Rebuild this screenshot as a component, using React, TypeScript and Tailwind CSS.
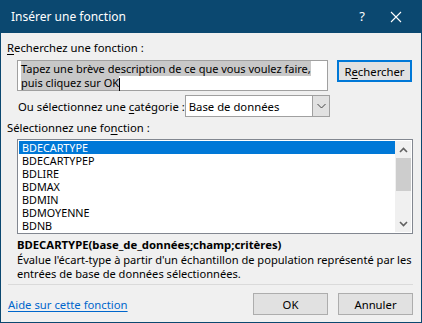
import React from "react";

const font = { fontFamily: '"Noto Sans", "Segoe UI", sans-serif' };

function U({ children }: { children: React.ReactNode }) {
  return <span className="underline underline-offset-2">{children}</span>;
}

export default function App() {
  const items = ["BDECARTYPE", "BDECARTYPEP", "BDLIRE", "BDMAX", "BDMIN", "BDMOYENNE", "BDNB"];
  return (
    <div
      className="w-[422px] h-[323px] bg-[#0b4870] flex flex-col px-px pb-px text-[11.3px] leading-[15px] text-black whitespace-nowrap overflow-hidden"
      style={font}
    >
      <div className="h-[33px] flex items-center text-white text-[12px] shrink-0">
        <span className="ml-[10px]">Insérer une fonction</span>
        <span className="ml-auto mr-[25px] text-[13px]">?</span>
        <svg width="12" height="12" viewBox="0 0 12 12" className="mr-[19px]">
          <path d="M1 1 L11 11 M11 1 L1 11" stroke="white" strokeWidth="1.1" />
        </svg>
      </div>
      <div className="flex-1 bg-[#f0f0f0] flex flex-col pl-[6px] pr-[8px]">
        <div className="mt-[7px] h-[15px]">
          <U>R</U>echerchez une fonction :
        </div>
        <div className="mt-[5px] flex items-start">
          <div className="ml-[10px] w-[311px] h-[31px] border border-[#a0a0a0] bg-white px-[3px] pt-px leading-[14px] text-[11px]">
            <span className="bg-[#c8c8c8]">Tapez une brève description de ce que vous voulez faire,</span>
            <br />
            <span className="bg-[#c8c8c8]">puis cliquez sur OK</span>
            <span className="inline-block w-px h-[13px] bg-black align-middle" />
          </div>
          <div className="ml-[9px] w-[75px] h-[22px] border-2 border-[#0078d7] bg-[#e1e1e1] flex items-center justify-center">
            R<U>e</U>chercher
          </div>
        </div>
        <div className="mt-[4px] flex items-center h-[22px]">
          <span className="ml-[11px]">
            Ou sélectionnez une <U>c</U>atégorie :
          </span>
          <div className="ml-auto mr-[83px] w-[157px] h-[22px] border border-[#a0a0a0] bg-white flex items-center">
            <span className="ml-[3px]">Base de données</span>
            <div className="ml-auto w-[17px] h-full bg-[#e1e1e1] border-l border-[#a0a0a0] flex items-center justify-center">
              <svg width="9" height="6" viewBox="0 0 9 6">
                <path d="M0.5 1 L4.5 5 L8.5 1" stroke="#444" fill="none" strokeWidth="1" />
              </svg>
            </div>
          </div>
        </div>
        <div className="mt-[3px] h-[15px]">
          Sélectionnez une fo<U>n</U>ction :
        </div>
        <div className="mt-[4px] ml-[10px] w-[396px] h-[95px] border border-[#828790] bg-white flex p-px">
          <div className="flex-1 flex flex-col">
            {items.map((it, i) => (
              <div
                key={it}
                className={
                  "h-[13px] leading-[13px] text-[10.8px] pl-[3px] " + (i === 0 ? "bg-[#0078d7] text-white" : "")
                }
              >
                {it}
              </div>
            ))}
          </div>
          <div className="w-[16px] bg-[#f0f0f0] flex flex-col items-center">
            <div className="h-[17px] flex items-center justify-center">
              <svg width="9" height="6" viewBox="0 0 9 6">
                <path d="M1 5 L4.5 1.5 L8 5" stroke="#606060" fill="none" strokeWidth="1.6" />
              </svg>
            </div>
            <div className="w-[15px] h-[33px] bg-[#cdcdcd]" />
            <div className="mt-auto h-[17px] flex items-center justify-center">
              <svg width="9" height="6" viewBox="0 0 9 6">
                <path d="M1 1 L4.5 4.5 L8 1" stroke="#606060" fill="none" strokeWidth="1.6" />
              </svg>
            </div>
          </div>
        </div>
        <div className="mt-[3px] ml-[10px] font-bold h-[15px]">
          BDECARTYPE(base_de_données;champ;critères)
        </div>
        <div className="mt-[1px] ml-[10px] leading-[14px] text-[11.1px]">
          Évalue l'écart-type à partir d'un échantillon de population représenté par les
          <br />
          entrées de base de données sélectionnées.
        </div>
        <div className="mt-[3px] ml-px h-px bg-[#dadada]" />
        <div className="mt-[8px] flex items-center">
          <span className="ml-px text-[#0066cc] underline underline-offset-2">Aide sur cette fonction</span>
          <div className="ml-auto w-[75px] h-[22px] border border-[#adadad] bg-[#e1e1e1] flex items-center justify-center">
            OK
          </div>
          <div className="ml-[10px] w-[75px] h-[22px] border border-[#adadad] bg-[#e1e1e1] flex items-center justify-center">
            Annuler
          </div>
        </div>
      </div>
    </div>
  );
}
